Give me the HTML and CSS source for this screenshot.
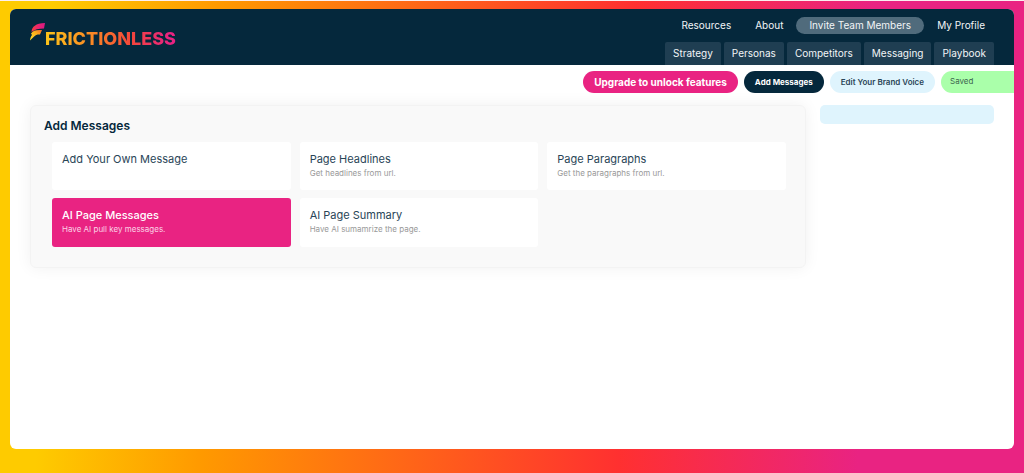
FILE: index.html
```
<!DOCTYPE html>
<html lang="en">
<head>
<meta charset="utf-8">
<meta name="viewport" content="width=device-width, initial-scale=1">
<title>Frictionless – Add Messages</title>
<link rel="stylesheet" href="styles.css">
</head>
<body>
<div class="app">
  <header class="header">
    <a class="logo" href="#" aria-label="Frictionless home">
      <svg class="logo-mark" viewBox="0 0 15 18" aria-hidden="true">
        <defs>
          <linearGradient id="mark-top" x1="0" y1="0" x2="1" y2="0">
            <stop offset="0" stop-color="#f4433a"/>
            <stop offset=".5" stop-color="#ea2370"/>
            <stop offset="1" stop-color="#d81a84"/>
          </linearGradient>
          <linearGradient id="mark-low" x1="0" y1="1" x2="1" y2="0">
            <stop offset="0" stop-color="#fde02a"/>
            <stop offset=".6" stop-color="#fdae1c"/>
            <stop offset="1" stop-color="#f7632a"/>
          </linearGradient>
        </defs>
        <path fill="url(#mark-low)" d="M1 10.500C3 7.500 6 6.500 12 7L10 11.500H7.500C5 12 3.500 14 0 17.500C.3 15 1 13 2 12Z"/>
        <path fill="url(#mark-top)" d="M1.500 9C2 3.500 5.500 .5 15 0L14 5.500C8.500 5.500 4.500 6.500 1.500 9Z"/>
      </svg>
      <span class="logo-text">FRICTIONLESS</span>
    </a>
    <div class="menus">
      <nav class="top-nav" aria-label="Account">
        <a href="#">Resources</a>
        <a href="#">About</a>
        <a class="invite" href="#">Invite Team Members</a>
        <a href="#">My Profile</a>
      </nav>
      <nav class="tabs" aria-label="Sections">
        <a href="#">Strategy</a>
        <a href="#">Personas</a>
        <a href="#">Competitors</a>
        <a href="#">Messaging</a>
        <a href="#">Playbook</a>
      </nav>
    </div>
  </header>
  <div class="toolbar">
    <button class="pill upgrade" type="button">Upgrade to unlock features</button>
    <button class="pill add" type="button">Add Messages</button>
    <button class="pill edit" type="button">Edit Your Brand Voice</button>
    <div class="saved" role="status">Saved</div>
  </div>
  <main class="content">
    <section class="panel">
      <h1 class="panel-title">Add Messages</h1>
      <div class="cards">
        <button class="card" type="button"><span class="card-title">Add Your Own Message</span></button>
        <button class="card" type="button"><span class="card-title">Page Headlines</span><span class="card-note">Get headlines from url.</span></button>
        <button class="card" type="button"><span class="card-title">Page Paragraphs</span><span class="card-note">Get the paragraphs from url.</span></button>
        <button class="card active" type="button"><span class="card-title">AI Page Messages</span><span class="card-note">Have AI pull key messages.</span></button>
        <button class="card" type="button"><span class="card-title">AI Page Summary</span><span class="card-note">Have AI sumamrize the page.</span></button>
      </div>
    </section>
    <aside class="side"></aside>
  </main>
</div>
</body>
</html>
```
FILE: styles.css
```
* { box-sizing: border-box; }

body {
  margin: 0;
  min-height: 100vh;
  padding: 8px 10px 24px;
  border-top: 1px solid #fbeff0;
  display: flex;
  background: linear-gradient(92deg, #fecb00 5%, #ff9900 21%, #ff3030 61%, #e92382 84%);
  font-family: Inter, "Open Sans", sans-serif;
  color: #05283c;
}

a { color: inherit; text-decoration: none; }
button { font: inherit; border: 0; cursor: pointer; }

.app {
  flex: 1;
  min-width: 0;
  background: #fff;
  border-radius: 6px;
  overflow: hidden;
}

.header {
  display: flex;
  justify-content: space-between;
  padding: 8px 20px 0;
  background: #05283c;
  color: #f2f5f7;
}

.logo {
  display: flex;
  align-items: flex-start;
  padding-top: 6px;
}
.logo-mark { width: 15px; height: 18px; }
.logo-text {
  padding-top: 4px;
  font-size: 18px;
  line-height: 24px;
  font-weight: 800;
  background: linear-gradient(90deg, #fdc51a, #fb8a24 35%, #f4473a 65%, #e92382 95%);
  -webkit-background-clip: text;
  background-clip: text;
  color: transparent;
}

.menus {
  display: flex;
  flex-direction: column;
  align-items: flex-end;
  gap: 8px;
}
.top-nav {
  display: flex;
  padding-right: 9px;
  font-size: 10px;
  line-height: 17px;
}
.top-nav a + a { margin-left: 24px; }
.top-nav .invite {
  padding: 0 13px;
  border-radius: 9px;
  background: #506b7c;
}
.top-nav a.invite, .top-nav .invite + a { margin-left: 13px; }

.tabs {
  display: flex;
  gap: 3px;
  font-size: 10px;
  line-height: 23px;
}
.tabs a {
  padding: 0 8px;
  border-radius: 2px 2px 0 0;
  background: #1f3e52;
}

.toolbar {
  display: flex;
  justify-content: flex-end;
  gap: 6px;
  padding-top: 6px;
}
.pill {
  padding: 0 11px;
  border-radius: 11px;
  font-size: 8px;
  line-height: 22px;
  font-weight: 700;
}
.upgrade { background: #e92382; color: #fff; font-size: 10px; }
.add { background: #05283c; color: #fff; }
.edit { background: #dff4fd; color: #294557; font-weight: 600; }
.saved {
  width: 73px;
  padding-left: 9px;
  border-radius: 11px 0 0 11px;
  background: #aaffaa;
  color: #3d6650;
  font-size: 8px;
  line-height: 20px;
}

.content {
  display: grid;
  grid-template-columns: minmax(0, 776fr) minmax(0, 174fr);
  align-items: start;
  gap: 14px;
  padding: 12px 20px 0;
}
.panel {
  padding: 10px 19px 20px 13px;
  border: 1px solid #f3f3f3;
  border-radius: 6px;
  background: #f9f9f9;
  box-shadow: 0 0 16px rgba(0, 0, 0, .06);
}
.panel-title {
  margin: 0 0 6px;
  font-size: 12px;
  line-height: 20px;
  font-weight: 600;
}
.cards {
  display: grid;
  grid-template-columns: repeat(3, minmax(0, 1fr));
  gap: 8px 9px;
  padding-left: 8px;
}
.card {
  display: flex;
  flex-direction: column;
  min-height: 48px;
  padding: 9px 10px;
  border-radius: 3px;
  background: #fff;
  color: #294557;
  text-align: left;
}
.card-title { font-size: 11px; line-height: 16px; }
.card-note { font-size: 8px; line-height: 12px; color: #999; }
.card.active { min-height: 49px; background: #e92382; color: #fff; }
.card.active .card-title { font-weight: 500; }
.card.active .card-note { color: #fbd3e6; }

.side {
  min-height: 19px;
  border-radius: 5px;
  background: #dff4fd;
}
```
